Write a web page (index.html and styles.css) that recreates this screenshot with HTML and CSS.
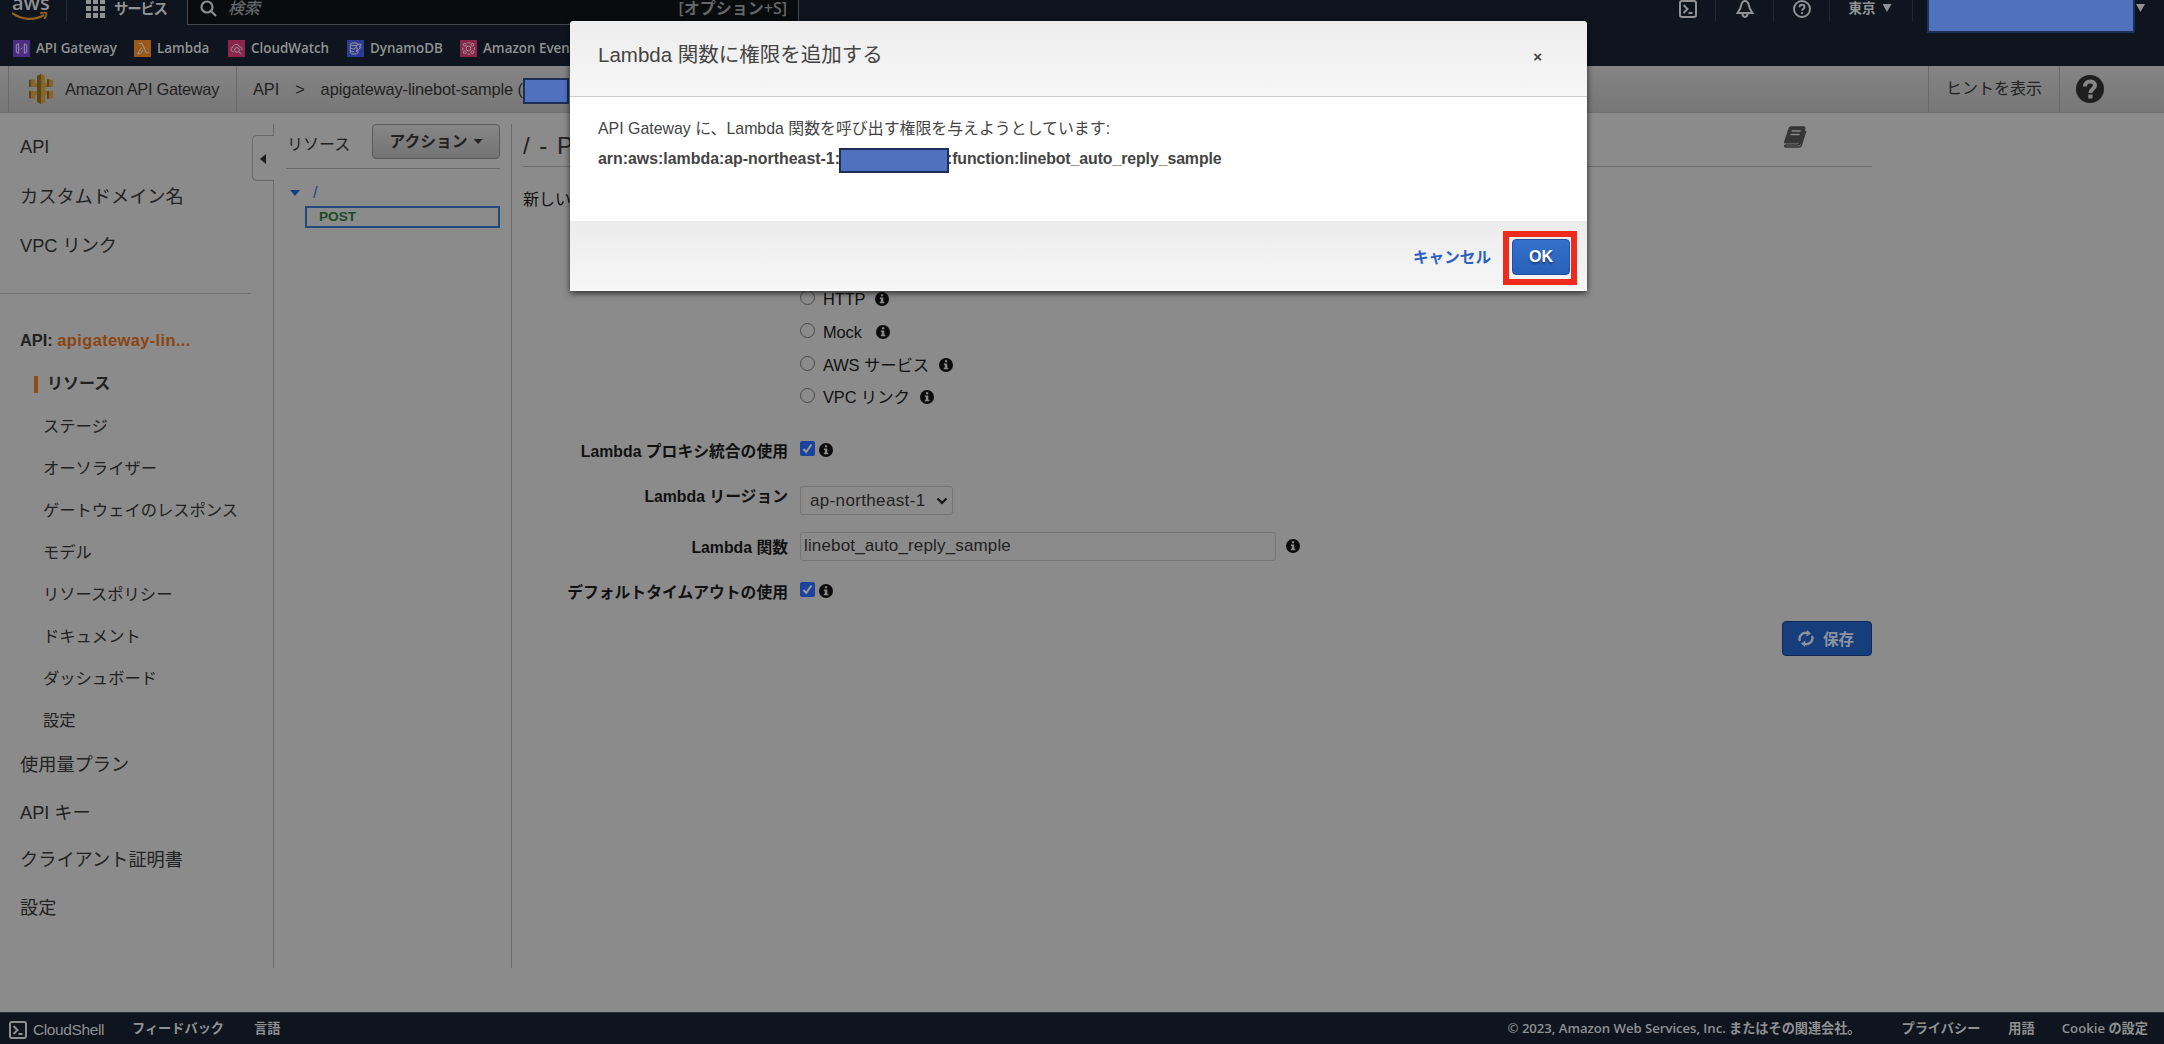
FILE: index.html
```
<!DOCTYPE html>
<html lang="ja">
<head>
    <meta charset="UTF-8">
    <meta name="viewport" content="width=device-width, initial-scale=1.0">
    <title>API Gateway</title>
    <link rel="stylesheet" href="styles.css">
</head>
<body>
    <svg class="sprite">
        <symbol id="info" viewBox="0 0 14 14">
            <circle cx="7" cy="7" r="7" fill="#0b0b0b"/>
            <path d="M5.9 2.3h2.3v2H5.9zM4.9 5.4h3.4v4.4h1v1.5H4.8V9.8h1V6.9h-.9z" fill="#8b8b8b"/>
        </symbol>
        <symbol id="shell" viewBox="0 0 18 18">
            <rect x="1" y="1" width="16" height="16" rx="2" fill="none" stroke="currentColor" stroke-width="2"/>
            <path d="M4.5 5l4 4-4 4M9.5 13h4" fill="none" stroke="currentColor" stroke-width="2"/>
        </symbol>
    </svg>

    <header class="nav">
        <div class="nav-top">
            <div class="logo">
                <span>aws</span>
                <svg width="36" height="9" viewBox="0 0 36 9"><path d="M0 1c10 7.500 23 7.500 32 2" fill="none" stroke="#96601a" stroke-width="2.200"/><path d="M28 1.200c3-.8 5-.8 6.300-.2.500 2-.6 4-2.300 6" fill="none" stroke="#96601a" stroke-width="1.800"/></svg>
            </div>
            <div class="services">
                <svg width="19" height="19" viewBox="0 0 19 19" fill="#8f9193"><path d="M0 0h5v5H0zM7 0h5v5H7zM14 0h5v5h-5zM0 7h5v5H0zM7 7h5v5H7zM14 7h5v5h-5zM0 14h5v5H0zM7 14h5v5H7zM14 14h5v5h-5z"/></svg>
                <span>サービス</span>
            </div>
            <div class="search">
                <svg width="17" height="17" viewBox="0 0 17 17" fill="none" stroke="#8a8c8e" stroke-width="2.200"><circle cx="7" cy="7" r="5.500"/><path d="M11 11l5 5"/></svg>
                <span class="placeholder">検索</span>
                <span class="shortcut">[オプション+S]</span>
            </div>
            <div class="nav-right">
                <div class="cell shell"><svg width="18" height="18"><use href="#shell"/></svg></div>
                <div class="cell bell"><svg width="18" height="18" viewBox="0 0 18 18" fill="none" stroke="currentColor" stroke-width="2"><path d="M9 1C6 1 5.500 3.500 5 6c-.5 3-2 4.500-3.500 7h15c-1.500-2.500-3-4-3.500-7-.5-2.500-1-5-4-5zM6.500 13.500c0 4.500 5 4.500 5 0"/></svg></div>
                <div class="cell help"><svg width="18" height="18" viewBox="0 0 18 18" fill="none" stroke="currentColor" stroke-width="2"><circle cx="9" cy="9" r="8"/><path d="M6.500 7.200c0-3.200 5-3.200 5 0 0 1.600-2.400 1.600-2.400 3.600M9.100 12v1.900"/></svg></div>
                <div class="cell region"><span>東京</span><i class="tri"></i></div>
                <div class="account"><i class="redact"></i><i class="tri"></i></div>
            </div>
        </div>
        <nav class="favorites">
            <a class="fav-api"><svg class="fav purple" viewBox="0 0 18 18"><path d="M6 4L3.500 5v8L6 14M12 4l2.500 1v8l-2.500 1M6 4v10M12 4v10M8 10l2-2"/></svg>API Gateway</a>
            <a class="fav-lambda"><svg class="fav orange" viewBox="0 0 18 18"><path d="M5 3.500h3.500l4.500 10h2M8 8l-4 6.500h3l2.500-4"/></svg>Lambda</a>
            <a class="fav-watch"><svg class="fav pink" viewBox="0 0 18 18"><path d="M6 12.500H5c-3-1-2-5 0-4.500 0-4 6-4.500 7-1 3 0 3 3 2 4"/><circle cx="9.500" cy="10.500" r="2.500"/><path d="M11.500 12.500l3 2.500"/></svg>CloudWatch</a>
            <a class="fav-dynamo"><svg class="fav blue" viewBox="0 0 18 18"><ellipse cx="7.500" cy="4.500" rx="4" ry="1.500"/><path d="M3.500 4.500v9c1 2 7 2 8 0v-2M3.500 8c1 1.500 3 1.500 5 1.200M3.500 11c1 1.200 2 1.500 4 1.500M11 4.500h4l-2 3h2l-5 5 1-4H9z"/></svg>DynamoDB</a>
            <a class="fav-event"><svg class="fav pink" viewBox="0 0 18 18"><circle cx="9" cy="9" r="2.500"/><circle cx="5" cy="5" r="1.500"/><circle cx="13" cy="5" r="1.500"/><circle cx="5" cy="13" r="1.500"/><circle cx="13" cy="13" r="1.500"/><path d="M8 3h3M8 15h3M3 8v3M15 8v3"/></svg>Amazon Event</a>
        </nav>
    </header>

    <div class="crumbs">
        <div class="product">
            <svg width="26" height="30" viewBox="0 0 26 30"><path d="M9 2l4-2 4 2v26l-4 2-4-2zM1 6l6-1v4h12V5l6 1v7H1zM1 17h24v7l-6 1v-4H7v4l-6-1z" fill="#86652a"/><path d="M9 2l4-2v30l-4-2zM1 6l2-.4V13H1zM1 17h2v7.400L1 24zM19 5l2 .4V13h-2zM19 17h2v7.600l-2 .4z" fill="#5f4516"/></svg>
            <span>Amazon API Gateway</span>
        </div>
        <div class="path"><span>API</span><span class="sep">&gt;</span><span class="name">apigateway-linebot-sample (</span><i class="redact"></i></div>
        <div class="hint">ヒントを表示</div>
        <div class="help-big"><svg width="28" height="28" viewBox="0 0 28 28"><circle cx="14" cy="14" r="14" fill="#1e1e1e"/><path d="M9 11.500C9 5 19 5 19 10.500c0 3.500-4.600 3.200-4.600 7.500" fill="none" stroke="#868686" stroke-width="4"/><path d="M12.300 19.500h4.200v4h-4.200z" fill="#868686"/></svg></div>
    </div>

    <div class="layout">
        <aside class="sidebar">
            <div class="edge">
                <div class="collapse"><i></i></div>
            </div>
            <ul class="menu">
                <li>API</li>
                <li>カスタムドメイン名</li>
                <li>VPC リンク</li>
            </ul>
            <div class="api-name">API: <span>apigateway-lin...</span></div>
            <ul class="submenu">
                <li class="current">リソース</li>
                <li>ステージ</li>
                <li>オーソライザー</li>
                <li>ゲートウェイのレスポンス</li>
                <li>モデル</li>
                <li>リソースポリシー</li>
                <li>ドキュメント</li>
                <li>ダッシュボード</li>
                <li>設定</li>
            </ul>
            <ul class="menu bottom">
                <li>使用量プラン</li>
                <li>API キー</li>
                <li>クライアント証明書</li>
                <li>設定</li>
            </ul>
        </aside>

        <section class="resources">
            <div class="resources-head">
                <span>リソース</span>
                <button class="actions">アクション<i class="caret"></i></button>
            </div>
            <div class="root"><i class="caret"></i><span>/</span></div>
            <div class="method">POST</div>
        </section>

        <main class="content">
            <div class="content-head">
                <h1>/ - POST</h1>
                <svg width="24" height="23" viewBox="0 0 24 23"><path d="M7 1h13.500c1 0 1.500.7 1.200 1.600L17 17.500c-.3.900-1 1.500-2 1.500H3.500C1.500 19 1 20.500 3 21h13c1.200 0 1.800-.6 2.200-1.700L22.700 5" fill="none" stroke="#353535" stroke-width="1.600"/><path d="M7 1h13.500c1 0 1.500.7 1.200 1.600L17 17.500H2c-1 0-1-1-.8-2L5.500 2.500C5.800 1.500 6 1 7 1z" fill="#353535"/><path d="M8.700 5h9M7.700 8.500h9" stroke="#858585" stroke-width="1.500"/></svg>
            </div>
            <p class="lead">新しい</p>
            <div class="radios">
                <label><input type="radio" name="type"><span>HTTP</span><svg class="info"><use href="#info"/></svg></label>
                <label class="mock"><input type="radio" name="type"><span>Mock</span><svg class="info"><use href="#info"/></svg></label>
                <label><input type="radio" name="type"><span>AWS サービス</span><svg class="info"><use href="#info"/></svg></label>
                <label><input type="radio" name="type"><span>VPC リンク</span><svg class="info"><use href="#info"/></svg></label>
            </div>
            <div class="form">
                <div class="row proxy">
                    <label>Lambda プロキシ統合の使用</label>
                    <i class="check"><svg viewBox="0 0 15 15"><path d="M3.500 8l2.700 3L11.500 3.500"/></svg></i>
                    <svg class="info"><use href="#info"/></svg>
                </div>
                <div class="row region-row">
                    <label>Lambda リージョン</label>
                    <div class="select"><span>ap-northeast-1</span><svg width="12" height="8" viewBox="0 0 12 8"><path d="M1.500 1.500L6 6l4.500-4.500" fill="none" stroke="#111" stroke-width="2.200"/></svg></div>
                </div>
                <div class="row function-row">
                    <label>Lambda 関数</label>
                    <div class="input">linebot_auto_reply_sample</div>
                    <svg class="info"><use href="#info"/></svg>
                </div>
                <div class="row timeout">
                    <label>デフォルトタイムアウトの使用</label>
                    <i class="check"><svg viewBox="0 0 15 15"><path d="M3.500 8l2.700 3L11.500 3.500"/></svg></i>
                    <svg class="info"><use href="#info"/></svg>
                </div>
            </div>
            <button class="save"><svg width="16" height="17" viewBox="0 0 16 17" fill="none" stroke="#8c929c" stroke-width="2.400"><path d="M2 11C0 6 5 1.500 10 3.200M14 6c2 5-3 9.500-8 7.800"/><path d="M9 0l4 3.500L8.500 6.500zM7 17l-4-3.500L7.500 10.500z" fill="#8c929c" stroke="none"/></svg><span>保存</span></button>
        </main>
    </div>

    <footer class="footer">
        <svg width="18" height="18"><use href="#shell"/></svg>
        <span class="cloudshell">CloudShell</span>
        <span class="feedback">フィードバック</span>
        <span class="lang">言語</span>
        <span class="copyright">© 2023, Amazon Web Services, Inc. またはその関連会社。</span>
        <span class="privacy">プライバシー</span>
        <span class="terms">用語</span>
        <span class="cookie">Cookie の設定</span>
    </footer>

    <div class="modal">
        <div class="modal-header">
            <h2>Lambda 関数に権限を追加する</h2>
            <span class="close">×</span>
        </div>
        <div class="modal-body">
            <p>API Gateway に、Lambda 関数を呼び出す権限を与えようとしています:</p>
            <p class="arn"><span>arn:aws:lambda:ap-northeast-1:</span><i class="redact"></i><span class="arn-end">:function:linebot_auto_reply_sample</span></p>
        </div>
        <div class="modal-footer">
            <a class="cancel">キャンセル</a>
            <div class="highlight"><button class="ok">OK</button></div>
        </div>
    </div>
</body>
</html>
```
FILE: styles.css
```
* {
    box-sizing: border-box;
}
body {
    margin: 0;
    width: 2164px;
    height: 1044px;
    overflow: hidden;
    position: relative;
    display: flex;
    flex-direction: column;
    background: #8b8b8b;
    color: #222;
    font-family: "Liberation Sans", "Noto Sans CJK JP", sans-serif;
    font-size: 16.4px;
    white-space: nowrap;
}
ul, p, h1, h2 {
    margin: 0;
    padding: 0;
    list-style: none;
    font-weight: normal;
}
svg {
    display: block;
    flex: none;
}
button {
    font-family: inherit;
    padding: 0;
}
.sprite {
    position: absolute;
    width: 0;
    height: 0;
}
.redact {
    display: block;
    flex: none;
    background: #4f71be;
    border: 2px solid #1c2f57;
}
.info {
    width: 14px;
    height: 14px;
}

/* top navigation */
.nav {
    height: 66px;
    flex: none;
    background: #0e151e;
    color: #909294;
    font-family: "Open Sans", "Noto Sans CJK JP", sans-serif;
    font-weight: 600;
}
.nav-top {
    display: flex;
    height: 25px;
}
.logo {
    width: 67px;
    height: 22px;
    padding-left: 12px;
    border-right: 1px solid #222a33;
}
.logo span {
    display: block;
    height: 12px;
    line-height: 5px;
    font-size: 20px;
    color: #8f9193;
}
.services {
    display: flex;
    width: 120px;
    padding-left: 19px;
    margin-top: -1px;
}
.services span {
    margin-left: 9px;
    font-size: 14.5px;
    line-height: 19px;
    letter-spacing: -1.3px;
}
.search {
    display: flex;
    width: 612px;
    height: 25px;
    padding: 0 11px 0 12px;
    background: #090b0d;
    border: 1px solid #44484c;
    border-top: 0;
    line-height: 17px;
    color: #63676a;
}
.placeholder {
    margin-left: 11px;
    font-size: 16px;
    font-weight: 500;
    font-style: italic;
}
.shortcut {
    margin-left: auto;
    font-size: 16px;
}
.nav-right {
    display: flex;
    margin-left: auto;
    line-height: 17px;
}
.cell {
    display: flex;
    height: 21px;
    justify-content: center;
    border-right: 1px solid #202832;
}
.shell {
    width: 69px;
    padding-left: 14px;
}
.bell {
    width: 58px;
}
.help {
    width: 56px;
}
.region {
    width: 83px;
    padding-right: 2px;
    font-size: 13.5px;
    font-weight: 700;
}
.tri {
    width: 9px;
    height: 8px;
    background: #909294;
    clip-path: polygon(0 0, 100% 0, 50% 100%);
    margin: 4px 0 0 7px;
}
.account {
    display: flex;
    width: 251px;
    padding-left: 14px;
}
.account .redact {
    width: 208px;
    height: 33px;
    border-top: 0;
}
.account .tri {
    margin-left: 1px;
}
.favorites {
    display: flex;
    height: 41px;
    padding: 5px 0 0 13px;
    align-items: center;
    font-size: 13.4px;
}
.favorites a {
    display: flex;
    align-items: center;
    gap: 6px;
}
.fav {
    width: 17px;
    height: 17px;
    fill: none;
    stroke: #9c9c9c;
    stroke-width: 1;
}
.purple { background: #4a2c84; }
.orange { background: #9a591a; }
.pink { background: #8d2449; }
.blue { background: #2c3b96; }
.fav-api { width: 121px; }
.fav-lambda { width: 94px; }
.fav-watch { width: 119px; }
.fav-dynamo { width: 113px; }
.fav-event {
    width: 110px;
    overflow: hidden;
}

/* breadcrumb bar */
.crumbs {
    display: flex;
    flex: none;
    height: 47px;
    padding-left: 8px;
    background: linear-gradient(#848484, #777);
    border-bottom: 1px solid #6f6f6f;
    align-items: center;
    letter-spacing: -0.1px;
}
.product {
    display: flex;
    align-items: center;
    width: 229px;
    height: 46px;
    padding-left: 19px;
    border: 1px solid #6a6a6a;
    border-width: 0 1px;
    letter-spacing: -0.3px;
}
.product span {
    margin-left: 11px;
}
.path {
    display: flex;
    align-items: center;
    padding-left: 16px;
}
.sep {
    margin: 0 16px;
}
.crumbs .redact {
    width: 46px;
    height: 26px;
    margin-top: 4px;
}
.hint {
    width: 132px;
    height: 46px;
    margin-left: auto;
    line-height: 45px;
    text-align: center;
    font-size: 16px;
    letter-spacing: 0;
    border: 1px solid #6a6a6a;
    border-width: 0 1px;
}
.help-big {
    width: 104px;
    padding-left: 16px;
}

.layout {
    display: flex;
    flex: 1;
    min-height: 0;
}

/* sidebar */
.sidebar {
    position: relative;
    width: 274px;
    height: 855px;
}
.edge {
    position: absolute;
    right: 0;
    top: 11px;
    width: 22px;
    height: 844px;
    border-right: 1px solid #6a6a6a;
}
.collapse {
    width: 22px;
    height: 46px;
    margin-top: 11px;
    background: #8b8b8b;
    border: 1px solid #6a6a6a;
    border-right: 0;
    border-radius: 5px 0 0 5px;
}
.collapse i {
    display: block;
    width: 6px;
    height: 10px;
    margin: 18px 0 0 7px;
    background: #1c1c1c;
    clip-path: polygon(100% 0, 100% 100%, 0 50%);
}
.menu {
    font-size: 18.200px;
    width: 251px;
    height: 181px;
    padding: 10px 0 0 20px;
    border-bottom: 1px solid #6f6f6f;
}
.menu li {
    height: 49.500px;
    line-height: 48px;
}
.api-name {
    height: 69px;
    padding: 23px 0 0 20px;
    line-height: 46px;
    font-weight: bold;
}
.api-name span {
    color: #8a4412;
    letter-spacing: 0.4px;
}
.submenu {
    padding-left: 43px;
    font-size: 16.3px;
}
.submenu li {
    height: 42px;
    line-height: 42px;
}
.submenu .current {
    margin-left: -9px;
    font-weight: bold;
    font-size: 16px;
    display: flex;
    align-items: center;
}
.current::before {
    content: "";
    width: 4px;
    height: 17px;
    margin-right: 9px;
    background: #8f4d0c;
}
.menu.bottom {
    height: 200px;
    border: 0;
    padding-top: 0;
}
.bottom li {
    height: 47.700px;
}

/* resource tree */
.resources {
    width: 238px;
    height: 844px;
    margin-top: 11px;
    padding: 0 11px 0 12px;
    border-right: 1px solid #6a6a6a;
}
.resources-head {
    display: flex;
    justify-content: space-between;
    height: 45px;
    border-bottom: 1px solid #6a6a6a;
    font-size: 16px;
    line-height: 42px;
    padding-left: 1px;
}
.actions {
    display: flex;
    align-items: center;
    justify-content: center;
    width: 128px;
    height: 35px;
    padding-bottom: 2px;
    background: linear-gradient(#868686, #747474);
    border: 1px solid #5b5b5b;
    border-radius: 4px;
    font-size: 15.8px;
    font-weight: bold;
    color: #222;
}
.caret {
    width: 9px;
    height: 5px;
    margin: 2px 0 0 6px;
    background: #222;
    clip-path: polygon(0 0, 100% 0, 50% 100%);
}
.root {
    display: flex;
    align-items: center;
    height: 37px;
    padding-top: 10px;
    color: #1d4684;
}
.root .caret {
    width: 10px;
    height: 6px;
    margin: 1px 13px 0 4px;
    background: #153f82;
}
.method {
    height: 22px;
    margin-left: 19px;
    padding-left: 12px;
    border: 2px solid #24497d;
    font-size: 13.6px;
    font-weight: bold;
    line-height: 17px;
    color: #1b4a25;
}

/* main area */
.content {
    width: 1360px;
    padding: 11px 0 0 11px;
}
.content-head {
    display: flex;
    justify-content: space-between;
    height: 43px;
    padding-right: 65px;
    border-bottom: 1px solid #6a6a6a;
}
.content-head h1 {
    width: 47px;
    overflow: hidden;
    font-size: 24px;
    line-height: 44px;
    word-spacing: 2px;
    letter-spacing: 0.5px;
}
.content-head svg {
    margin-top: 2px;
}
.lead {
    height: 114px;
    line-height: 65px;
    font-size: 16px;
    color: #0f0f0f;
}
.radios {
    padding-left: 277px;
    height: 155px;
    color: #111;
}
.radios label {
    display: flex;
    height: 32.800px;
    line-height: 36px;
}
.radios input {
    appearance: none;
    width: 15px;
    height: 15px;
    margin: 9px 8px 0 0;
    border: 1px solid #4a4a4a;
    border-radius: 50%;
}
.radios span {
    letter-spacing: -0.1px;
}
.radios .info {
    margin: 11px 0 0 10px;
}
.radios .mock .info {
    margin-left: 14px;
}
.row {
    display: flex;
    color: #111;
}
.row label {
    width: 265px;
    margin-right: 12px;
    text-align: right;
    font-weight: bold;
    font-size: 15.8px;
    line-height: 24px;
}
.check {
    width: 15px;
    height: 15px;
    margin-right: 4px;
    border-radius: 2px;
    background: #1c439c;
}
.check svg {
    fill: none;
    stroke: #9a9a9a;
    stroke-width: 2;
}
.proxy {
    height: 50px;
}
.proxy .check, .timeout .check {
    margin-top: 5px;
}
.proxy .info, .timeout .info {
    margin-top: 7px;
}
.proxy label, .timeout label {
    padding-top: 4px;
}
.region-row {
    height: 46px;
}
.region-row label {
    margin-top: -1px;
}
.select {
    display: flex;
    align-items: center;
    justify-content: space-between;
    width: 153px;
    height: 29px;
    padding: 0 4px 0 9px;
    border: 1px solid #757575;
    border-radius: 3px;
    font-size: 17px;
    letter-spacing: 0.35px;
    color: #222;
}
.function-row {
    height: 45px;
}
.function-row label {
    padding-top: 4px;
}
.input {
    width: 476px;
    height: 29px;
    padding-left: 3px;
    border: 1px solid #757575;
    border-radius: 3px;
    line-height: 26px;
    font-size: 17px;
    letter-spacing: 0.15px;
    color: #222;
}
.function-row .info {
    margin: 7px 0 0 10px;
}
.save {
    display: flex;
    align-items: center;
    width: 90px;
    height: 35px;
    margin: 16px 0 0 auto;
    padding-left: 15px;
    gap: 9px;
    background: #163d7c;
    border: 1px solid #0f2a59;
    border-radius: 4px;
    font-size: 15.6px;
    font-weight: bold;
    color: #8c929c;
}
.save span {
    padding-bottom: 2px;
}

/* footer */
.footer {
    display: flex;
    flex: none;
    align-items: center;
    height: 32px;
    padding: 0 16px 2px 9px;
    background: #0e151e;
    border-top: 1px solid #2a333d;
    color: #8e9092;
    font-family: "Open Sans", "Noto Sans CJK JP", sans-serif;
    font-size: 13.200px;
    font-weight: 600;
}
.footer svg, .cloudshell {
    margin-top: 5px;
}
.cloudshell {
    width: 99px;
    margin-left: 6px;
    font: 15.500px "Liberation Sans", sans-serif;
    letter-spacing: -0.4px;
}
.feedback {
    width: 122px;
}
.copyright {
    margin-left: auto;
    letter-spacing: -0.05px;
}
.privacy {
    margin: 0 28px 0 41px;
}
.cookie {
    margin-left: 27px;
}

/* permission dialog */
.modal {
    position: absolute;
    left: 570px;
    top: 21px;
    width: 1017px;
    height: 270px;
    background: #fff;
    border-radius: 4px 4px 0 0;
    box-shadow: 0 2px 6px rgba(0, 0, 0, 0.7);
    color: #444;
}
.modal-header {
    display: flex;
    justify-content: space-between;
    height: 76px;
    padding: 0 45px 0 28px;
    background: linear-gradient(#ededed, #f6f6f6);
    border-bottom: 1px solid #ccc;
    border-radius: 4px 4px 0 0;
}
.modal-header h2 {
    font-size: 20.500px;
    line-height: 67px;
}
.close {
    font-size: 15px;
    font-weight: bold;
    line-height: 72px;
}
.modal-body {
    height: 124px;
    padding: 17px 28px;
    font-size: 15.9px;
}
.modal-body p {
    height: 30px;
    line-height: 30px;
}
.modal-body .arn {
    display: flex;
    align-items: center;
    font-weight: bold;
}
.arn .redact {
    position: relative;
    width: 110px;
    height: 25px;
    margin: 2px -2px 0 -1px;
}
.arn-end {
    letter-spacing: -0.1px;
}
.modal-footer {
    display: flex;
    justify-content: flex-end;
    height: 70px;
    padding: 10px 10px 0 0;
    background: linear-gradient(#ececec, #f6f6f6);
    border-bottom: 1px solid #fff;
}
.cancel {
    margin-right: 12px;
    line-height: 53px;
    font-size: 15.6px;
    font-weight: bold;
    color: #2b63bd;
}
.highlight {
    width: 74px;
    height: 54px;
    padding: 2px 3px;
    border: 6px solid #ee2b1c;
}
.ok {
    display: block;
    width: 58px;
    height: 36px;
    background: linear-gradient(#3470cd, #2961b8);
    border: 1px solid #1f4f9e;
    border-radius: 4px;
    color: #fff;
    font-size: 16px;
    font-weight: bold;
    text-shadow: 0 2px 2px rgba(0, 0, 0, 0.4);
}
```
